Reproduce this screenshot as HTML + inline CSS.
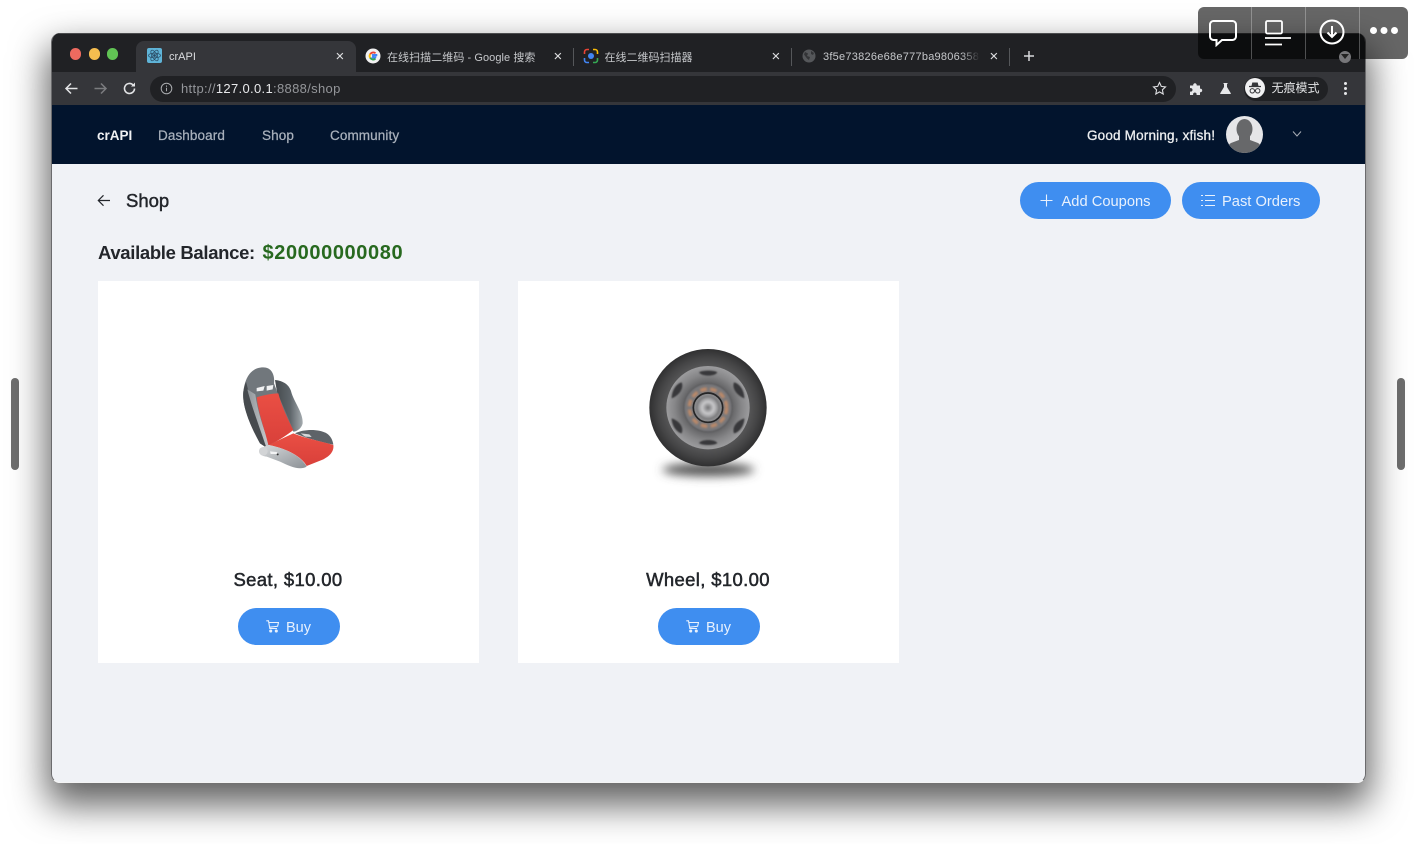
<!DOCTYPE html>
<html><head><meta charset="utf-8"><title>crAPI</title>
<style>
*{box-sizing:border-box}
html,body{margin:0;padding:0;width:1414px;height:844px;overflow:hidden;background:#fff;font-family:"Liberation Sans","Noto Sans CJK SC",sans-serif}
.a{position:absolute;white-space:nowrap}
#all{position:absolute;left:0;top:0;width:1414px;height:844px;filter:blur(.35px)}
#win{position:absolute;left:50.5px;top:33px;width:1315px;height:749.5px;border-radius:9px;background:#f0f2f6;box-shadow:0 18px 36px 4px rgba(0,0,0,.62)}
#clip{position:absolute;inset:0;border-radius:9px;overflow:hidden;border:1px solid #6b6b6d;border-top:0;border-bottom:1px solid #f4f4f4}
.tab{color:#c6c8cb;font-size:11px;top:15.5px}
.lat{top:17.5px}
.x{color:#dfe0e2;font-size:15px;line-height:15px;top:16px}
.sep{top:15px;width:1px;height:18px;background:#55575a}
.nav{color:#a9b1bc;font-size:13.5px;top:95px;letter-spacing:.1px;line-height:16px;-webkit-text-stroke:.25px #a9b1bc}
.btn{background:#3f8ef0;border-radius:19px;color:#e8f1fd;font-size:14.7px;line-height:40px;height:37px}
.card{position:absolute;top:248px;width:381px;height:382px;background:#fff}
.title{color:#23262b;font-size:18.5px;line-height:22px;text-align:center;left:0;right:0;letter-spacing:.35px;-webkit-text-stroke:.5px #23262b}
.buy{position:absolute;top:327px;width:102px;height:37px;background:#3f8ef0;border-radius:19px;color:#e8f1fd;font-size:14.5px;line-height:40.5px}
</style></head><body>
<div id="all">
<div class="a" style="left:11px;top:378px;width:8px;height:92px;background:#6e6e6e;border-radius:4px"></div>
<div class="a" style="left:1397px;top:378px;width:8px;height:92px;background:#6e6e6e;border-radius:4px"></div>

<div id="win"><div id="clip">
 <!-- tab strip -->
 <div class="a" style="left:-1px;top:0;width:1318px;height:39px;background:#202124;border-top:1px solid #4b4c4e"></div>
 <div class="a" style="left:18px;top:15px;width:11.500px;height:11.500px;border-radius:50%;background:#ee6a5f"></div>
 <div class="a" style="left:37px;top:15px;width:11.500px;height:11.500px;border-radius:50%;background:#f5bd4f"></div>
 <div class="a" style="left:55px;top:15px;width:11.500px;height:11.500px;border-radius:50%;background:#61c454"></div>
 <div class="a" style="left:84px;top:8px;width:220px;height:32px;background:#35363a;border-radius:8px 8px 0 0"></div>
 <div class="a" style="left:95px;top:15px;width:15px;height:15px;background:#5fb4d8;border-radius:2px"></div>
 <svg class="a" style="left:95px;top:15px" width="15" height="15" viewBox="0 0 15 15" fill="none" stroke="#2a4a63" stroke-width=".7"><ellipse cx="7.500" cy="7.500" rx="6" ry="2.400"/><ellipse cx="7.500" cy="7.500" rx="6" ry="2.400" transform="rotate(60 7.500 7.500)"/><ellipse cx="7.500" cy="7.500" rx="6" ry="2.400" transform="rotate(120 7.500 7.500)"/><circle cx="7.500" cy="7.500" r="1" fill="#2a4a63"/></svg>
 <div class="a tab lat" style="left:117.500px;color:#dcdde0">crAPI</div>
 <div class="a x" style="left:284px">×</div>
 <svg class="a" style="left:313px;top:15px" width="16" height="16" viewBox="0 0 16 16" fill="none"><circle cx="8" cy="8" r="7.500" fill="#f1f1f1"/><path d="M12.300 7H8v2.100h2.400a2.700 2.700 0 0 1-5 .5" stroke="#4285f4" stroke-width="1.900"/><path d="M5.200 9.900a3.500 3.500 0 0 1 0-3.800" stroke="#fbbc05" stroke-width="1.900"/><path d="M5.200 6.200a3.500 3.500 0 0 1 5.300-.9" stroke="#ea4335" stroke-width="1.900"/><path d="M5.200 9.800a3.500 3.500 0 0 0 5.200 1" stroke="#34a853" stroke-width="1.900"/></svg>
 <div class="a tab" style="left:335.500px;letter-spacing:.06px">在线扫描二维码 - Google 搜索</div>
 <div class="a x" style="left:502px">×</div>
 <div class="a sep" style="left:521px"></div>
 <svg class="a" style="left:531px;top:15px" width="16" height="16" viewBox="0 0 16 16" fill="none" stroke-width="1.600"><path d="M1.500 6V4a2.500 2.500 0 0 1 2.500-2.500h2" stroke="#ea4335"/><path d="M10 1.500h2A2.500 2.500 0 0 1 14.500 4v2" stroke="#fbbc05"/><path d="M14.500 10v2a2.500 2.500 0 0 1-2.500 2.500h-2" stroke="#34a853"/><path d="M6 14.500H4A2.500 2.500 0 0 1 1.500 12v-2" stroke="#4285f4"/><circle cx="8" cy="8" r="3" fill="#4285f4" stroke="none"/></svg>
 <div class="a tab" style="left:553px">在线二维码扫描器</div>
 <div class="a x" style="left:720px">×</div>
 <div class="a sep" style="left:739px"></div>
 <svg class="a" style="left:750px;top:16px" width="14" height="14" viewBox="0 0 14 14"><circle cx="7" cy="7" r="6.500" fill="#55575a"/><path d="M3 3l3 1.500-1 2.500 3 1-1 3-2-1.500-3-4zM9 2l3 2-1 2-2-1z" fill="#333437"/></svg>
 <div class="a tab lat" style="left:771.500px;width:157px;overflow:hidden;letter-spacing:.25px;-webkit-mask-image:linear-gradient(90deg,#000 88%,transparent);mask-image:linear-gradient(90deg,#000 88%,transparent)">3f5e73826e68e777ba9806358c</div>
 <div class="a x" style="left:938px">×</div>
 <div class="a sep" style="left:957px"></div>
 <svg class="a" style="left:971px;top:17px" width="12" height="12" viewBox="0 0 12 12"><path d="M6 1v10M1 6h10" stroke="#d8d9db" stroke-width="1.500"/></svg>

 <!-- toolbar -->
 <div class="a" style="left:-1px;top:39px;width:1318px;height:33px;background:#35363a"></div>
 <div class="a" style="left:98px;top:43px;width:1026px;height:26px;background:#202124;border-radius:13px"></div>
 <svg class="a" style="left:12px;top:48px" width="15" height="15" viewBox="0 0 15 15" fill="none" stroke="#e3e4e6" stroke-width="1.500"><path d="M13.500 7.500H2M7 2.500l-5 5 5 5"/></svg>
 <svg class="a" style="left:41px;top:48px" width="15" height="15" viewBox="0 0 15 15" fill="none" stroke="#7b7c7f" stroke-width="1.500"><path d="M1.500 7.500H13M8 2.500l5 5-5 5"/></svg>
 <svg class="a" style="left:70px;top:48px" width="15" height="15" viewBox="0 0 15 15" fill="none" stroke="#e3e4e6" stroke-width="1.600"><path d="M12.500 7.500a5 5 0 1 1-1.500-3.600"/><path d="M13 1.500v4H9z" fill="#e3e4e6" stroke="none"/></svg>
 <svg class="a" style="left:108px;top:49px" width="13" height="13" viewBox="0 0 13 13" fill="none" stroke="#a9abae" stroke-width="1"><circle cx="6.500" cy="6.500" r="5.300"/><path d="M6.500 5.800v3.500M6.500 3.500v1.200"/></svg>
 <div class="a" style="left:129.500px;top:47.500px;font-size:13px;line-height:16px;color:#94969a;letter-spacing:.33px">http://<span style="color:#e8e9eb">127.0.0.1</span>:8888/shop</div>
 <svg class="a" style="left:1100px;top:48px" width="15" height="15" viewBox="0 0 15 15" fill="none" stroke="#dcdde0" stroke-width="1.100"><path d="M7.500 1.500l1.800 3.900 4.200.5-3.100 2.900.8 4.200-3.700-2.100-3.700 2.100.8-4.200L1.500 5.900l4.200-.5z"/></svg>
 <svg class="a" style="left:1137px;top:48px" width="15" height="15" viewBox="0 0 15 15"><path d="M1 4.500h3.200a1.800 1.800 0 1 1 3.500 0H11v3.200a1.800 1.800 0 1 1 0 3.500V14H7.500a1.800 1.800 0 1 0-3.300 0H1v-3.500a1.800 1.800 0 1 0 0-3.300z" fill="#e6e7e9"/></svg>
 <svg class="a" style="left:1167px;top:49px" width="13" height="13" viewBox="0 0 13 13"><path d="M4.500 1h4v1H8v3l3.800 6.300c.2.400 0 .7-.4.700H1.600c-.4 0-.6-.3-.4-.7L5 5V2h-.5z" fill="#e6e7e9"/></svg>
 <div class="a" style="left:1192px;top:44px;width:84px;height:24px;background:#202124;border-radius:12px"></div>
 <div class="a" style="left:1193px;top:45px;width:20px;height:20px;background:#f1f1f2;border-radius:50%"></div>
 <svg class="a" style="left:1193px;top:45px" width="20" height="20" viewBox="0 0 20 20" fill="none" stroke="#35363a"><path d="M6.500 8l.8-3.500h5.400L13.500 8z" fill="#35363a" stroke="none"/><path d="M4 8.500h12" stroke-width="1.200"/><circle cx="7.300" cy="12.800" r="2.200"/><circle cx="12.700" cy="12.800" r="2.200"/><path d="M9.500 12.500h1"/></svg>
 <div class="a" style="left:1220px;top:47px;font-size:12px;line-height:16px;color:#e2e3e5">无痕模式</div>
 <div class="a" style="left:1292px;top:49px;width:3px;height:3px;border-radius:50%;background:#e6e7e9;box-shadow:0 5px 0 #e6e7e9,0 10px 0 #e6e7e9"></div>

 <!-- navbar -->
 <div class="a" style="left:-1px;top:72px;width:1318px;height:59px;background:#02142d"></div>
 <div class="a" style="left:45.500px;top:95px;color:#f0f1f3;font-size:13.500px;line-height:16px;font-weight:bold">crAPI</div>
 <div class="a nav" style="left:106.500px">Dashboard</div>
 <div class="a nav" style="left:210.500px">Shop</div>
 <div class="a nav" style="left:278.500px">Community</div>
 <div class="a" style="left:1035.500px;top:95px;color:#eceef0;font-size:13.500px;line-height:16px;letter-spacing:.18px;-webkit-text-stroke:.3px #eceef0">Good Morning, xfish!</div>
 <svg class="a" style="left:1174.500px;top:83px" width="37" height="37" viewBox="0 0 37 37"><clipPath id="av"><circle cx="18.500" cy="18.500" r="18.500"/></clipPath><g clip-path="url(#av)"><rect width="37" height="37" fill="#e6e6e8"/><ellipse cx="18.500" cy="13" rx="8" ry="10" fill="#67686a"/><path d="M13 19h11v5l8 3c2 1 4 4 5 10H0c1-6 3-9 5-10l8-3z" fill="#67686a"/></g></svg>
 <svg class="a" style="left:1240px;top:97px" width="10" height="8" viewBox="0 0 10 8" fill="none" stroke="#a9aeb6" stroke-width="1"><path d="M1 1.500l4 4.500 4-4.500"/></svg>

 <!-- page head -->
 <svg class="a" style="left:45px;top:161px" width="14" height="13" viewBox="0 0 14 13" fill="none" stroke="#23262b" stroke-width="1.200"><path d="M13 6.500H1.500M6.500 1.300L1.300 6.500l5.200 5.200"/></svg>
 <div class="a" style="left:74.500px;top:156px;font-size:18.500px;line-height:23px;color:#23262b;-webkit-text-stroke:.45px #23262b">Shop</div>
 <div class="a btn" style="left:968px;top:149px;width:151px"><svg class="a" style="left:20.500px;top:12px" width="13" height="13" viewBox="0 0 13 13" stroke="#e8f1fd" stroke-width="1.100"><path d="M6.500 .5v12M.5 6.500h12"/></svg><span class="a" style="left:42px;top:0">Add Coupons</span></div>
 <div class="a btn" style="left:1130px;top:149px;width:138px"><svg class="a" style="left:19px;top:12px" width="14" height="13" viewBox="0 0 14 13" stroke="#e8f1fd" stroke-width="1.100"><path d="M4 1.500h10M4 6.500h10M4 11.500h10M0 1.500h2M0 6.500h2M0 11.500h2"/></svg><span class="a" style="left:40.500px;top:0">Past Orders</span></div>
 <div class="a" style="left:46.500px;top:208px;font-size:18.500px;line-height:23px;color:#23262b;font-weight:bold;letter-spacing:-.33px">Available Balance:</div>
 <div class="a" style="left:211px;top:208.500px;font-size:20px;line-height:23px;font-weight:bold;color:#27691f;letter-spacing:.6px">$20000000080</div>

 <!-- cards -->
 <div class="card" style="left:46px"></div>
 <div class="card" style="left:466px"></div>
 <div class="a" style="left:46px;top:248px;width:381px;height:382px">
  <div class="a title" style="top:288px">Seat, $10.00</div>
  <div class="buy" style="left:140px"><svg class="a" style="left:28px;top:12px" width="13" height="13" viewBox="0 0 13 13" fill="none" stroke="#e8f1fd" stroke-width="1.100"><path d="M.3 .8h2.200l1.300 7.700h7.200M2.800 2.500h9.700l-.9 3.800-7.900.9"/><circle cx="4.700" cy="11" r="1" fill="#e8f1fd"/><circle cx="10.300" cy="11" r="1" fill="#e8f1fd"/></svg><span class="a" style="left:48.500px;top:0">Buy</span></div>
 </div>
 <div class="a" style="left:466px;top:248px;width:381px;height:382px">
  <div class="a title" style="top:288px">Wheel, $10.00</div>
  <div class="buy" style="left:140px"><svg class="a" style="left:28px;top:12px" width="13" height="13" viewBox="0 0 13 13" fill="none" stroke="#e8f1fd" stroke-width="1.100"><path d="M.3 .8h2.200l1.300 7.700h7.200M2.800 2.500h9.700l-.9 3.800-7.900.9"/><circle cx="4.700" cy="11" r="1" fill="#e8f1fd"/><circle cx="10.300" cy="11" r="1" fill="#e8f1fd"/></svg><span class="a" style="left:48.500px;top:0">Buy</span></div>
 </div>
</div></div>

<!-- seat image -->
<svg class="a" style="left:210px;top:350px" width="150" height="130" viewBox="0 0 450 390">
 <defs>
  <linearGradient id="s1" x1="0" y1="0" x2="1" y2="0"><stop offset="0" stop-color="#454a4e"/><stop offset=".55" stop-color="#5f666b"/><stop offset="1" stop-color="#a4abaf"/></linearGradient>
  <linearGradient id="s2" x1="0" y1="0" x2="1" y2="1"><stop offset="0" stop-color="#d8dbdd"/><stop offset="1" stop-color="#8b9095"/></linearGradient>
  <linearGradient id="s3" x1="0" y1="0" x2="1" y2="0"><stop offset="0" stop-color="#8f9599"/><stop offset="1" stop-color="#c9cccf"/></linearGradient>
  <linearGradient id="s4" x1="0" y1="0" x2="0" y2="1"><stop offset="0" stop-color="#ea4f44"/><stop offset="1" stop-color="#d9403a"/></linearGradient>
 </defs>
 <path d="M195 90C220 92 240 105 245 130C255 160 280 190 278 220C275 235 260 245 250 245L205 150Z" fill="url(#s1)"/>
 <path d="M100 125C105 80 125 52 160 52C185 52 195 75 192 100L205 135L250 240L190 280L165 290L150 280C125 235 95 170 100 125Z" fill="#71777c"/>
 <path d="M100 125C102 115 104 105 108 95C114 120 128 170 170 288L165 290L150 280C125 235 95 170 100 125Z" fill="#464a4e"/>
 <path d="M112 118L136 133C142 180 160 235 178 282L168 290C150 235 125 170 112 118Z" fill="url(#s3)"/>
 <path d="M140 114L164 108L160 122L140 124ZM170 108L190 105L188 118L170 122Z" fill="#f1f2f3"/>
 <path d="M140 142C160 135 190 130 205 130C215 170 235 210 250 240C225 260 200 275 175 285C165 240 145 190 140 142Z" fill="url(#s4)"/>
 <path d="M255 250C285 235 330 238 350 250C362 258 368 270 370 284C330 275 290 265 255 250Z" fill="#5e6368"/>
 <path d="M272 250L298 253L305 261L285 260Z" fill="#d6d8da"/>
 <path d="M175 285L250 250C285 265 340 275 370 285C372 300 365 315 340 328L290 348C275 320 230 295 175 285Z" fill="url(#s4)"/>
 <path d="M150 295L175 285C230 295 275 320 290 350C270 362 240 350 210 335L170 320C150 318 143 305 150 295Z" fill="url(#s2)"/>
 <circle cx="160" cy="304" r="13" fill="#d2d4d6"/>
 <path d="M180 304L200 306L205 312L182 312Z" fill="#f3f4f5"/><circle cx="203" cy="313" r="3" fill="#333"/>
</svg>

<!-- wheel image -->
<svg class="a" style="left:630px;top:335px" width="155" height="155" viewBox="0 0 465 465">
 <defs>
  <radialGradient id="w1"><stop offset=".7" stop-color="#565657"/><stop offset=".85" stop-color="#454546"/><stop offset="1" stop-color="#303031"/></radialGradient>
  <radialGradient id="w2"><stop offset=".55" stop-color="#5f5f61"/><stop offset=".8" stop-color="#868688"/><stop offset="1" stop-color="#9c9c9e"/></radialGradient>
  <radialGradient id="w3"><stop offset="0" stop-color="#717173"/><stop offset=".5" stop-color="#c8c8ca"/><stop offset=".8" stop-color="#9a9a9c"/><stop offset="1" stop-color="#6f6f71"/></radialGradient>
  <filter id="bl" x="-30%" y="-150%" width="160%" height="400%"><feGaussianBlur stdDeviation="14"/></filter>
  <filter id="b2" x="-30%" y="-30%" width="160%" height="160%"><feGaussianBlur stdDeviation="2"/></filter>
  <filter id="b3" x="-30%" y="-30%" width="160%" height="160%"><feGaussianBlur stdDeviation="3.500"/></filter>
 </defs>
 <ellipse cx="235" cy="404" rx="138" ry="20" fill="#555" filter="url(#bl)"/>
 <circle cx="234" cy="218" r="176" fill="url(#w1)"/>
 <circle cx="234" cy="218" r="125" fill="url(#w2)"/>
 <g fill="#39393b" filter="url(#b2)">
  <path d="M207 112C215 105 255 105 262 112C255 125 215 125 207 112Z"/>
  <path d="M207 324C215 312 255 312 262 324C255 332 215 332 207 324Z"/>
  <path d="M125 190C125 165 140 145 155 142C162 158 150 180 125 190Z"/>
  <path d="M343 190C343 165 328 145 312 142C305 158 318 180 343 190Z"/>
  <path d="M125 250C125 272 140 292 155 295C162 278 150 258 125 250Z"/>
  <path d="M343 250C343 272 328 292 312 295C305 278 318 258 343 250Z"/>
 </g>
 <circle cx="234" cy="218" r="72" fill="#77777a" stroke="#5a5a5c" stroke-width="3" filter="url(#b2)"/>
 <circle cx="234" cy="218" r="56" fill="none" stroke="#c08a68" stroke-width="10" stroke-dasharray="20 10" filter="url(#b3)"/>
 <circle cx="234" cy="218" r="44" fill="#8a8a8c" stroke="#242425" stroke-width="5"/>
 <circle cx="234" cy="218" r="35" fill="url(#w3)" filter="url(#b2)"/>
</svg>

<!-- floating screenshot toolbar -->
<div class="a" style="left:1198px;top:7px;width:210px;height:52px;background:rgba(0,0,0,.6);border-radius:6px"></div>
<div class="a" style="left:1250.500px;top:7px;width:1px;height:52px;background:rgba(255,255,255,.28)"></div>
<div class="a" style="left:1304.500px;top:7px;width:1px;height:52px;background:rgba(255,255,255,.28)"></div>
<div class="a" style="left:1358.500px;top:7px;width:1px;height:52px;background:rgba(255,255,255,.28)"></div>
<svg class="a" style="left:1208px;top:19px" width="30" height="28" viewBox="0 0 30 28" fill="none" stroke="#fff" stroke-width="2"><path d="M5.500 2h19A3.500 3.500 0 0 1 28 5.500v12a3.500 3.500 0 0 1-3.500 3.500H14l-5.500 5v-5H5.500A3.500 3.500 0 0 1 2 17.500v-12A3.500 3.500 0 0 1 5.500 2z"/></svg>
<svg class="a" style="left:1264px;top:19px" width="28" height="28" viewBox="0 0 28 28" fill="none" stroke="#fff" stroke-width="1.800"><rect x="2" y="2" width="16" height="12.500" rx="1.500"/><path d="M1 19h26M1 25.500h17"/></svg>
<svg class="a" style="left:1319px;top:19px" width="26" height="26" viewBox="0 0 26 26" fill="none" stroke="#fff" stroke-width="2"><circle cx="13" cy="13" r="11.500"/><path d="M13 7v11M8.500 13.500L13 18l4.500-4.500"/></svg>
<div class="a" style="left:1370px;top:27px;width:7px;height:7px;border-radius:50%;background:#fff;box-shadow:10.500px 0 0 #fff,21px 0 0 #fff"></div>
<div class="a" style="left:1339px;top:51px;width:12px;height:12px;border-radius:50%;background:#77777a"></div>
<svg class="a" style="left:1341px;top:54px" width="8" height="6" viewBox="0 0 8 6"><path d="M0 0h8L4 5z" fill="#222"/></svg>
</div>
</body></html>
